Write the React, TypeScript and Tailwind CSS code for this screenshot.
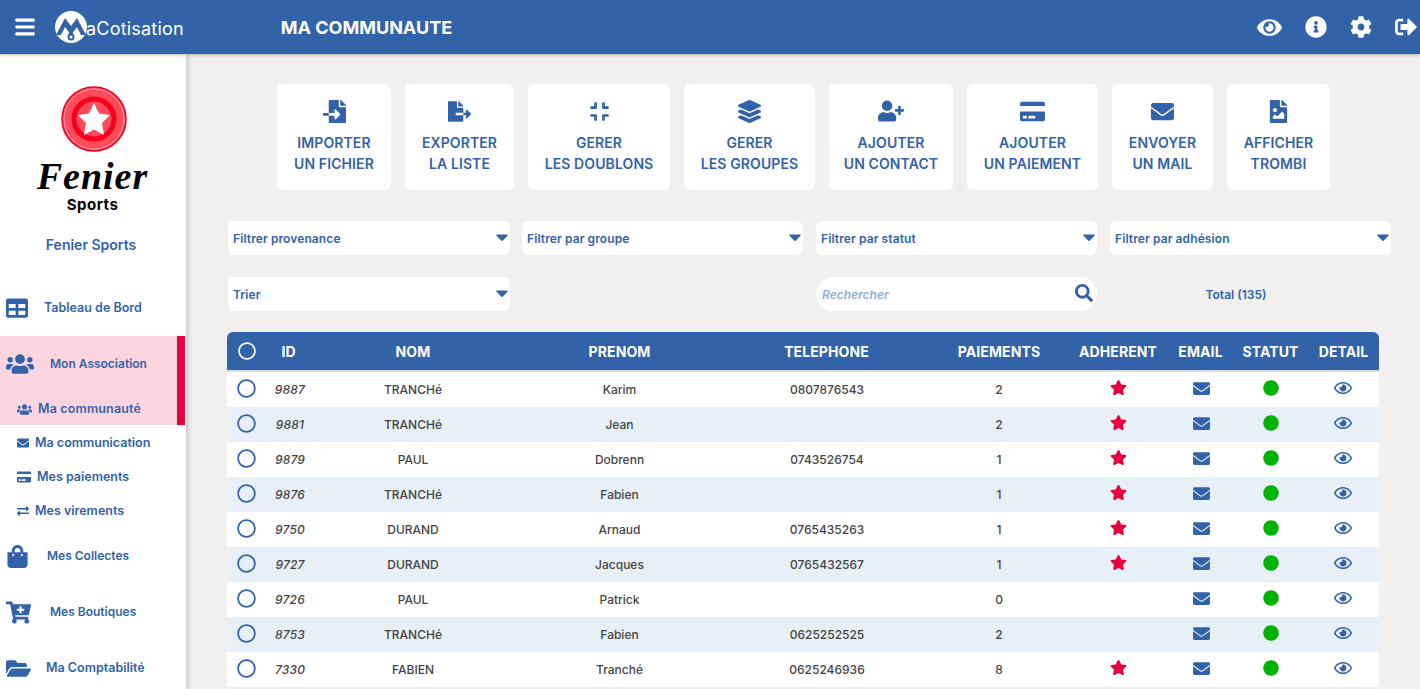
import type { ReactNode } from "react";
import {
  FaBars, FaEye, FaInfoCircle, FaCog, FaSignOutAlt, FaFileImport, FaFileExport, FaCompress,
  FaLayerGroup, FaUserPlus, FaCreditCard, FaEnvelope, FaFileImage, FaTable, FaUsers, FaExchangeAlt,
  FaShoppingBag, FaCartPlus, FaFolderOpen, FaSearch, FaStar, FaCircle, FaRegCircle, FaRegEye, FaCaretDown,
} from "react-icons/fa";

const actions: { icon: ReactNode; top: string; bottom: string; width: string }[] = [
  { icon: <FaFileImport size={23} />, top: "IMPORTER", bottom: "UN FICHIER", width: "w-[114px]" },
  { icon: <FaFileExport size={23} />, top: "EXPORTER", bottom: "LA LISTE", width: "w-[109px]" },
  { icon: <FaCompress size={21} />, top: "GERER", bottom: "LES DOUBLONS", width: "w-[142px]" },
  { icon: <FaLayerGroup size={23} />, top: "GERER", bottom: "LES GROUPES", width: "w-[131px]" },
  { icon: <FaUserPlus size={26} />, top: "AJOUTER", bottom: "UN CONTACT", width: "w-[124px]" },
  { icon: <FaCreditCard size={25} />, top: "AJOUTER", bottom: "UN PAIEMENT", width: "w-[131px]" },
  { icon: <FaEnvelope size={23} />, top: "ENVOYER", bottom: "UN MAIL", width: "w-[101px]" },
  { icon: <FaFileImage size={23} />, top: "AFFICHER", bottom: "TROMBI", width: "w-[103px]" },
];

const contacts = [
  { id: "9887", nom: "TRANCHé", prenom: "Karim", tel: "0807876543", pay: 2, star: true },
  { id: "9881", nom: "TRANCHé", prenom: "Jean", tel: "", pay: 2, star: true },
  { id: "9879", nom: "PAUL", prenom: "Dobrenn", tel: "0743526754", pay: 1, star: true },
  { id: "9876", nom: "TRANCHé", prenom: "Fabien", tel: "", pay: 1, star: true },
  { id: "9750", nom: "DURAND", prenom: "Arnaud", tel: "0765435263", pay: 1, star: true },
  { id: "9727", nom: "DURAND", prenom: "Jacques", tel: "0765432567", pay: 1, star: true },
  { id: "9726", nom: "PAUL", prenom: "Patrick", tel: "", pay: 0, star: false },
  { id: "8753", nom: "TRANCHé", prenom: "Fabien", tel: "0625252525", pay: 2, star: false },
  { id: "7330", nom: "FABIEN", prenom: "Tranché", tel: "0625246936", pay: 8, star: true },
];

const cols = "grid grid-cols-[40px_43px_206px_207px_207px_138px_100px_65px_75px_71px] items-center text-center";

function Logo() {
  return (
    <div className="flex items-center ml-[19px]">
      <svg width="32" height="32" viewBox="0 0 32 32" className="shrink-0">
        <circle cx="16" cy="16" r="16" fill="#fff" />
        <path d="M1 24 L10 7 L16 15 L22 7 L31 24 L26 24 L22 16 L16 24 L10 16 L6 24 Z" fill="#3263a9" />
        <path d="M16 19 C18 22 19.5 24 19.5 26 A3.5 3.5 0 0 1 12.5 26 C12.5 24 14 22 16 19 Z" fill="#3263a9" />
        <circle cx="16" cy="26" r="1.5" fill="#fff" />
      </svg>
      <span className="text-white text-[18px] font-normal tracking-[0.2px] -ml-[1px] mt-[3px]">aCotisation</span>
    </div>
  );
}

function BrandMark() {
  return (
    <div className="h-[226px] flex flex-col items-center pt-[32px] pr-[1px]">
      <svg width="66" height="66" viewBox="0 0 66 66" className="ml-[2px]">
        <circle cx="33" cy="33" r="32" fill="#ff4a5a" stroke="#f5001e" strokeWidth="1.5" />
        <circle cx="33" cy="33" r="30" fill="none" stroke="#fff" strokeWidth="0.5" />
        <circle cx="33" cy="33" r="20" fill="#ff4a5a" stroke="#f5001e" strokeWidth="5" />
        <path d="M33 17 L38 27.5 L49 29 L41 37 L43 49 L33 43.5 L23 49 L25 37 L17 29 L28 27.5 Z" fill="#fff" />
      </svg>
      <div className="mt-[4px] h-[40px] text-black text-[38px] leading-[40px] font-bold italic tracking-[1px] font-['Liberation_Serif',serif]">Fenier</div>
      <div className="-mt-[1px] h-[20px] text-black text-[15px] leading-[20px] font-bold tracking-[0.5px]">Sports</div>
      <div className="mt-[20px] text-[#3263a9] text-[14px] leading-[20px] font-semibold -ml-[3px]">Fenier Sports</div>
    </div>
  );
}

function MainItem({ icon, label, labelClass }: { icon: ReactNode; label: string; labelClass: string }) {
  return (
    <div className="h-[56px] flex items-center pl-[6px] text-[#3263a9]">
      <div className="w-0">{icon}</div>
      <span className={`${labelClass} font-semibold whitespace-nowrap`}>{label}</span>
    </div>
  );
}

function SubItem({ icon, label, gap, height = "h-[34px]" }: { icon: ReactNode; label: string; gap: string; height?: string }) {
  return (
    <div className={`${height} flex items-center pl-[17px] text-[#3263a9]`}>
      {icon}
      <span className={`${gap} text-[12.5px] font-semibold whitespace-nowrap`}>{label}</span>
    </div>
  );
}

function Sidebar() {
  return (
    <aside className="w-[186px] shrink-0 bg-white shadow-[2px_0_5px_rgba(0,0,0,0.18)] overflow-hidden">
      <BrandMark />
      <MainItem icon={<FaTable size={22} />} label="Tableau de Bord" labelClass="ml-[38px] text-[12.5px] pt-px" />
      <div className="w-[185px] h-[89px] bg-[#fdd5e0] border-r-[8px] border-[#e6003c]">
        <MainItem icon={<FaUsers size={28} />} label="Mon Association" labelClass="ml-[44px] text-[12px]" />
        <div className="pt-[2px]">
          <SubItem icon={<FaUsers size={15} />} label="Ma communauté" gap="ml-[6px] tracking-[0.15px]" height="h-[31px]" />
        </div>
      </div>
      <div className="mt-px">
        <SubItem icon={<FaEnvelope size={12} />} label="Ma communication" gap="ml-[6px]" />
        <SubItem icon={<FaCreditCard size={14} />} label="Mes paiements" gap="ml-[6px]" />
        <SubItem icon={<FaExchangeAlt size={12} />} label="Mes virements" gap="ml-[6px]" />
      </div>
      <MainItem icon={<FaShoppingBag size={23} />} label="Mes Collectes" labelClass="ml-[41px] text-[12px]" />
      <MainItem icon={<FaCartPlus size={25} />} label="Mes Boutiques" labelClass="ml-[44px] text-[12px]" />
      <MainItem icon={<FaFolderOpen size={25} />} label="Ma Comptabilité" labelClass="ml-[40px] text-[12.5px] pt-px" />
    </aside>
  );
}

function Select({ label, width = "w-[281px]" }: { label: string; width?: string }) {
  return (
    <div className={`${width} h-[34px] bg-white rounded-md flex items-center justify-between pl-[5px] text-[#3263a9]`}>
      <span className="text-[12px] font-semibold tracking-[0.1px] pt-[2px]">{label}</span>
      <FaCaretDown size={20} className="-mt-[2px] -mr-[2px]" />
    </div>
  );
}

export default function App() {
  return (
    <div className="h-screen overflow-hidden flex flex-col bg-[#f1f0ee] font-['Inter',sans-serif]">
      <header className="h-[54px] shrink-0 bg-[#3263a9] flex items-center relative z-10 shadow-[0_1px_3px_rgba(0,0,0,0.25)]">
        <FaBars size={22} className="text-white ml-[14px] shrink-0" />
        <Logo />
        <h1 className="ml-[97px] text-white text-[18px] font-bold">MA COMMUNAUTE</h1>
        <div className="ml-auto flex items-center gap-[23px] text-white pr-[3px]">
          <FaEye size={25} />
          <FaInfoCircle size={22} />
          <FaCog size={22} />
          <FaSignOutAlt size={22} />
        </div>
      </header>

      <div className="flex flex-1 min-h-0">
        <Sidebar />
        <main className="flex-1 min-w-0 overflow-hidden pl-[41px] pt-[30px]">
          <div className="flex gap-[14px] pl-[50px]">
            {actions.map((a) => (
              <div key={a.top + a.bottom} className={`${a.width} h-[106px] bg-white rounded-md flex flex-col items-center text-[#3263a9]`}>
                <div className="h-[28px] mt-[13px] flex items-center">{a.icon}</div>
                <div className="mt-[7px] text-[14px] leading-[21px] font-semibold tracking-[0.1px] text-center whitespace-nowrap">
                  {a.top}
                  <br />
                  {a.bottom}
                </div>
              </div>
            ))}
          </div>

          <div className="flex gap-[13px] mt-[31px] pl-px">
            <Select label="Filtrer provenance" width="w-[282px] -mr-[1px]" />
            <Select label="Filtrer par groupe" />
            <Select label="Filtrer par statut" />
            <Select label="Filtrer par adhésion" />
          </div>

          <div className="flex items-center mt-[22px] pl-px">
            <Select label="Trier" width="w-[282px]" />
            <div className="ml-[306px] w-[281px] h-[34px] bg-white rounded-full flex items-center justify-between pl-[6px] pr-[4px] text-[#3263a9]">
              <span className="text-[12px] font-semibold italic text-[#8fb0d8] pt-[2px]">Rechercher</span>
              <FaSearch size={18} className="-mt-[2px]" />
            </div>
            <div className="w-[278px] text-center text-[#3263a9] text-[12px] font-semibold pt-[2px]">Total (135)</div>
          </div>

          <div className="w-[1152px] mt-[21px]">
            <div className={`${cols} h-[40px] bg-[#3263a9] rounded-t-md text-white text-[14px] font-bold tracking-[0.1px] border-b-2 border-[#d8dde5]`}>
              <span className="flex justify-center -ml-[1px]"><FaRegCircle size={18} /></span>
              <span>ID</span>
              <span>NOM</span>
              <span>PRENOM</span>
              <span>TELEPHONE</span>
              <span>PAIEMENTS</span>
              <span>ADHERENT</span>
              <span>EMAIL</span>
              <span>STATUT</span>
              <span>DETAIL</span>
            </div>
            {contacts.map((c, i) => (
              <div key={c.id} className={`${cols} h-[35px] text-[#444444] text-[12px] font-medium ${i % 2 === 1 ? "bg-[#e7eff7]" : "bg-white"}`}>
                <span className="flex justify-center text-[#3263a9] -mt-[2px] -ml-[2px]"><FaRegCircle size={19} /></span>
                <span className="italic tracking-[0.2px] pl-[3px]">{c.id}</span>
                <span>{c.nom}</span>
                <span>{c.prenom}</span>
                <span className="-mr-[1px]">{c.tel}</span>
                <span>{c.pay}</span>
                <span className="flex justify-center text-[#e6003c] -mt-[4px]">{c.star && <FaStar size={17} />}</span>
                <span className="flex justify-center text-[#3263a9] -mt-[3px] ml-[1px]"><FaEnvelope size={17} /></span>
                <span className="flex justify-center text-[#00b300] -mt-[4px] ml-[1px]"><FaCircle size={16} /></span>
                <span className="flex justify-center text-[#3263a9] -mt-[4px] -ml-[1px]"><FaRegEye size={18} /></span>
              </div>
            ))}
            <div className="h-[35px] bg-[#e7eff7]" />
          </div>
        </main>
      </div>
    </div>
  );
}
